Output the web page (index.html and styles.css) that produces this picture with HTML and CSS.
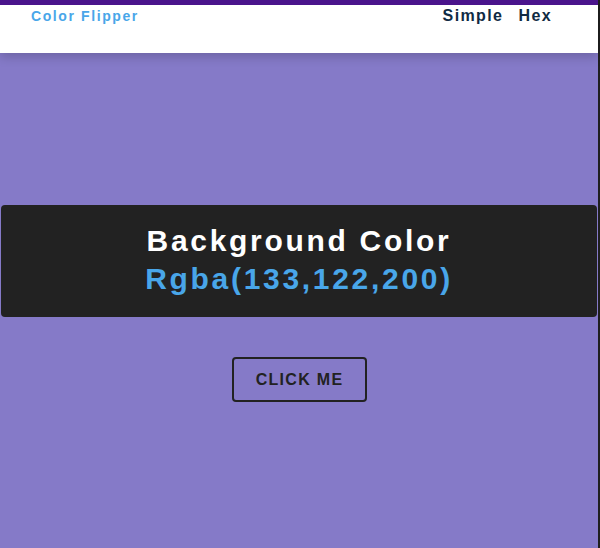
FILE: index.html
```html
<!DOCTYPE html>
<html>
<head>
<meta charset="utf-8">
<link rel="stylesheet" href="styles.css">
</head>
<body>
<div class="page">
  <nav class="nav">
    <h4 class="brand">Color Flipper</h4>
    <ul class="links">
      <li><a href="#">Simple</a></li>
      <li><a href="#">Hex</a></li>
    </ul>
  </nav>
  <main class="main">
    <div class="panel">
      <h2 class="title">Background Color</h2>
      <h2 class="value">Rgba(133,122,200)</h2>
    </div>
    <button class="btn">CLICK ME</button>
  </main>
</div>
</body>
</html>
```
FILE: styles.css
```css
* { box-sizing: border-box; }
html, body { margin: 0; padding: 0; }
body {
  background: #1f1f1f;
  font-family: "Liberation Sans", Arial, sans-serif;
  height: 548px;
  overflow: hidden;
}
.page {
  width: 598px;
  height: 548px;
  background: #857ac8;
}
.nav {
  height: 53px;
  background: #fff;
  border-top: 5px solid #4a148c;
  box-shadow: 0 4px 10px rgba(0, 0, 0, 0.18);
  display: flex;
  justify-content: space-between;
  align-items: flex-start;
  padding: 0 46px 0 31px;
  position: relative;
}
.brand {
  margin: 2px 0 0;
  font-size: 14px;
  font-weight: 700;
  letter-spacing: 1.6px;
  color: #49a6e9;
  line-height: 18px;
}
.links {
  list-style: none;
  margin: 0;
  padding: 0;
  display: flex;
  gap: 15px;
}
.links a {
  display: block;
  font-size: 16px;
  line-height: 22px;
  font-weight: 700;
  letter-spacing: 1.4px;
  color: #102a43;
  text-decoration: none;
}
.main {
  display: flex;
  flex-direction: column;
  align-items: center;
  padding-top: 152px;
}
.panel {
  width: 596px;
  margin: 0 1px;
  align-self: flex-start;
  background: #222;
  border-radius: 4px;
  padding: 17px 0 19px;
  text-align: center;
}
.title, .value {
  margin: 0;
  font-size: 30px;
  line-height: 38px;
  font-weight: 700;
  letter-spacing: 2.7px;
}
.title { color: #fff; }
.value { color: #49a6e9; }
.btn {
  margin-top: 40px;
  width: 135px;
  height: 45px;
  background: transparent;
  border: 2px solid #222;
  border-radius: 4px;
  color: #222;
  font-family: "Liberation Sans", Arial, sans-serif;
  font-size: 16px;
  font-weight: 700;
  letter-spacing: 1.3px;
  padding: 0 0 0 1px;
}
```
